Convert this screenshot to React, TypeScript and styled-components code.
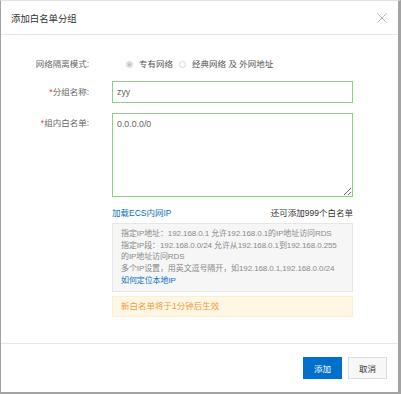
import React from "react";
import styled, { createGlobalStyle } from "styled-components";

const GlobalStyle = createGlobalStyle`
    html, body {
        margin: 0;
        padding: 0;
        background: #fff;
    }
    * {
        box-sizing: border-box;
    }
`;

const Dialog = styled.div`
    width: 401px;
    height: 394px;
    display: flex;
    flex-direction: column;
    background: #fff;
    border-top: 1px solid #e2e2e2;
    border-left: 1px solid #a3a3a3;
    border-right: 3px solid #a3a3a3;
    border-bottom: 2px solid #a3a3a3;
    font-family: "Liberation Sans", "Noto Sans CJK SC", sans-serif;
    font-size: 8.5px;
    color: #333;
`;

const Header = styled.div`
    height: 34px;
    flex: none;
    display: flex;
    align-items: center;
    justify-content: space-between;
    padding: 0 11px 0 10px;
    border-bottom: 1px solid #e8e8e8;
`;

const Title = styled.div`
    font-size: 9.4px;
    color: #333;
`;

const Close = styled.button`
    border: none;
    background: none;
    padding: 0;
    width: 11px;
    height: 11px;
    display: flex;
    align-items: center;
    justify-content: center;
`;

const Body = styled.div`
    flex: 1;
    padding-top: 18px;
    display: flex;
    flex-direction: column;
`;

const Row = styled.div<{ $top?: boolean; $gap?: number }>`
    display: flex;
    align-items: ${(p) => (p.$top ? "flex-start" : "center")};
    margin-bottom: ${(p) => p.$gap ?? 0}px;
`;

const Label = styled.div<{ $top?: boolean }>`
    width: 88px;
    flex: none;
    text-align: right;
    color: #666;
    line-height: 14px;
    margin-top: ${(p) => (p.$top ? "3px" : "0")};
`;

const Star = styled.span`
    color: #e4393c;
`;

const Control = styled.div`
    margin-left: 23px;
    width: 241px;
`;

const RadioGroup = styled.div`
    height: 22px;
    display: flex;
    align-items: center;
    padding-left: 14px;
    color: #555;
`;

const Radio = styled.span<{ $checked?: boolean }>`
    width: 7px;
    height: 7px;
    border-radius: 50%;
    border: 1px solid #d6d6d6;
    background: ${(p) => (p.$checked ? "#e6e6e6" : "#fff")};
    display: inline-flex;
    align-items: center;
    justify-content: center;
    margin-right: 6px;
    &::after {
        content: "";
        width: 3px;
        height: 3px;
        border-radius: 50%;
        background: ${(p) => (p.$checked ? "#bdbdbd" : "transparent")};
    }
`;

const RadioText = styled.span`
    margin-right: 6px;
    line-height: 14px;
`;

const TextInput = styled.input`
    display: block;
    width: 100%;
    height: 22px;
    border: 1px solid #8dd086;
    padding: 0 4px;
    font-family: inherit;
    font-size: 8.8px;
    color: #666;
    outline: none;
`;

const TextArea = styled.textarea`
    display: block;
    width: 100%;
    height: 84px;
    border: 1px solid #8dd086;
    padding: 4px 4px;
    font-family: inherit;
    font-size: 8.8px;
    line-height: 12px;
    color: #666;
    outline: none;
    resize: vertical;
`;

const LinkRow = styled.div`
    height: 18px;
    display: flex;
    align-items: center;
    justify-content: space-between;
    margin-bottom: 2px;
`;

const Link = styled.a`
    color: #0a6fc2;
    text-decoration: none;
    cursor: pointer;
`;

const Hint = styled.div`
    background: #f6f6f6;
    border: 1px solid #e6e6e6;
    padding: 4px 8px 4px 8px;
    font-size: 8px;
    letter-spacing: -0.1px;
    line-height: 11.7px;
    white-space: nowrap;
    color: #8a8a8a;
    margin-bottom: 4px;
`;

const Notice = styled.div`
    background: #fef7e4;
    border: 1px solid #fbefcd;
    padding: 0 8px;
    line-height: 19px;
    color: #f19a3e;
`;

const Footer = styled.div`
    height: 49px;
    flex: none;
    border-top: 1px solid #e8e8e8;
    display: flex;
    justify-content: flex-end;
    align-items: flex-start;
    gap: 6px;
    padding: 13px 11px 0 0;
`;

const Button = styled.button<{ $primary?: boolean }>`
    width: 39px;
    height: 22px;
    padding: 0;
    font-family: inherit;
    font-size: 8.5px;
    border: 1px solid ${(p) => (p.$primary ? "#0070cc" : "#dcdcdc")};
    background: ${(p) => (p.$primary ? "#0070cc" : "#f7f7f7")};
    color: ${(p) => (p.$primary ? "#fff" : "#333")};
`;

const hintLines = [
    "指定IP地址：192.168.0.1 允许192.168.0.1的IP地址访问RDS",
    "指定IP段：192.168.0.0/24 允许从192.168.0.1到192.168.0.255",
    "的IP地址访问RDS",
    "多个IP设置，用英文逗号隔开，如192.168.0.1,192.168.0.0/24",
];

export default () => {
    return (
        <>
            <GlobalStyle />
            <Dialog>
                <Header>
                    <Title>添加白名单分组</Title>
                    <Close type='button'>
                        <svg width='10' height='10' viewBox='0 0 10 10'>
                            <path
                                d='M0.5 0.5 L9.5 9.5 M9.5 0.5 L0.5 9.5'
                                stroke='#b5b5b5'
                                strokeWidth='1'
                                fill='none'
                            />
                        </svg>
                    </Close>
                </Header>
                <Body>
                    <Row $gap={6}>
                        <Label>网络隔离模式:</Label>
                        <Control>
                            <RadioGroup>
                                <Radio $checked />
                                <RadioText>专有网络</RadioText>
                                <Radio />
                                <RadioText>经典网络 及 外网地址</RadioText>
                            </RadioGroup>
                        </Control>
                    </Row>
                    <Row $gap={10}>
                        <Label>
                            <Star>*</Star>分组名称:
                        </Label>
                        <Control>
                            <TextInput defaultValue='zyy' />
                        </Control>
                    </Row>
                    <Row $top $gap={6}>
                        <Label $top>
                            <Star>*</Star>组内白名单:
                        </Label>
                        <Control>
                            <TextArea defaultValue='0.0.0.0/0' />
                        </Control>
                    </Row>
                    <Row $top>
                        <Label />
                        <Control>
                            <LinkRow>
                                <Link>加载ECS内网IP</Link>
                                <span>还可添加999个白名单</span>
                            </LinkRow>
                            <Hint>
                                {hintLines.map((line, idx) => (
                                    <div key={idx}>{line}</div>
                                ))}
                                <Link>如何定位本地IP</Link>
                            </Hint>
                            <Notice>新白名单将于1分钟后生效</Notice>
                        </Control>
                    </Row>
                </Body>
                <Footer>
                    <Button $primary type='button'>
                        添加
                    </Button>
                    <Button type='button'>取消</Button>
                </Footer>
            </Dialog>
        </>
    );
};
